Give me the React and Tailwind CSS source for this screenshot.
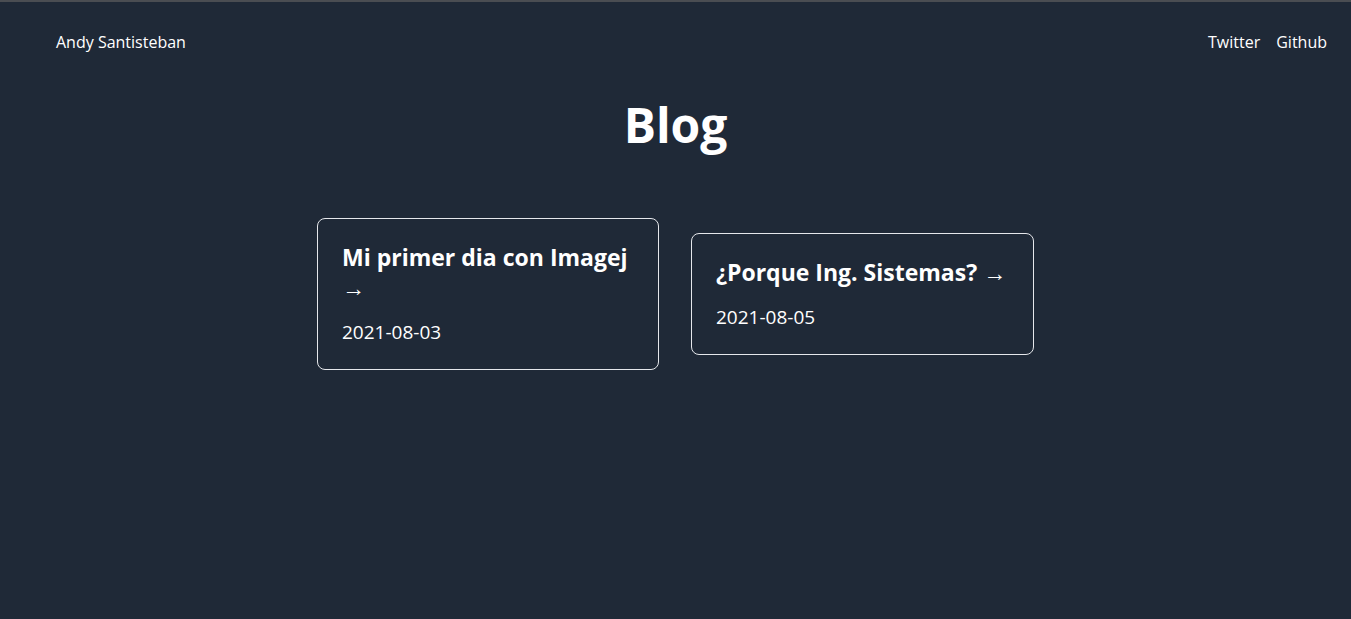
const posts = [
  { title: 'Mi primer dia con Imagej', date: '2021-08-03', width: 'w-[342px]' },
  { title: '¿Porque Ing. Sistemas?', date: '2021-08-05', width: 'w-[343px]' }
];

// Blog index
const App = () => {
  return (
    <div className="min-h-screen bg-[#1f2937] text-white border-t-2 border-[#4a4d52] font-['Open_Sans',sans-serif]">
      {/* Nav */}
      <header className="flex justify-between items-center pl-14 pr-6 pt-[28px]">
        <a href="#" className="text-base leading-6">Andy Santisteban</a>
        <nav className="flex gap-4 text-base leading-6">
          <a href="#">Twitter</a>
          <a href="#">Github</a>
        </nav>
      </header>

      <main className="flex flex-col items-center">
        <h1 className="text-5xl font-bold leading-none mt-[47px]">Blog</h1>

        {/* Post cards */}
        <div className="flex items-center gap-8 mt-[69px]">
          {posts.map((post) => (
            <a
              key={post.date}
              href="#"
              className={`${post.width} border border-gray-200 rounded-lg px-6 py-[23px]`}
            >
              <h2 className="text-[23px] font-bold leading-[30px]">
                {post.title} <span className="font-normal">→</span>
              </h2>
              <p className="text-[19px] leading-7 mt-4">{post.date}</p>
            </a>
          ))}
        </div>
      </main>
    </div>
  );
};

export default App;
